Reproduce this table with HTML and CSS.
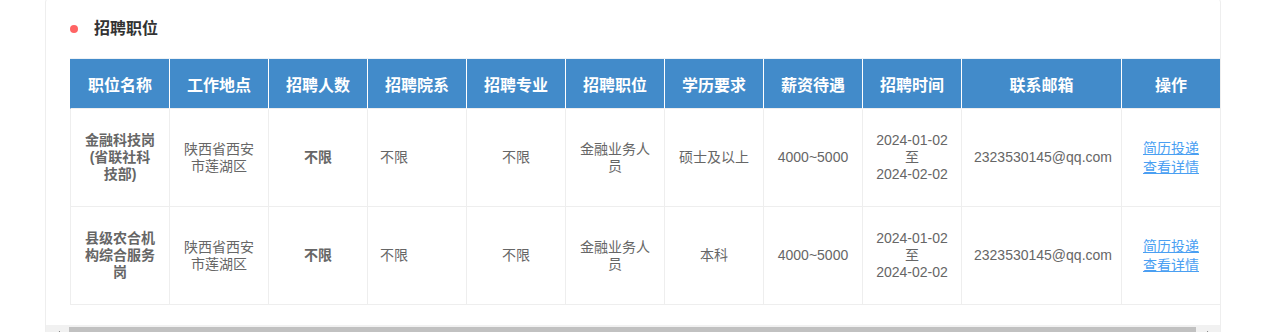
FILE: index.html
```html
<!DOCTYPE html>
<html lang="zh-CN">
<head>
<meta charset="utf-8">
<title>招聘职位</title>
<link rel="stylesheet" href="styles.css">
</head>
<body>
<div class="page">
  <div class="card">
    <div class="title"><span class="dot"></span><h2>招聘职位</h2></div>
    <div class="scroll">
      <table class="jobs">
        <thead>
          <tr>
            <th class="c-first">职位名称</th>
            <th class="c-std">工作地点</th>
            <th class="c-std">招聘人数</th>
            <th class="c-std">招聘院系</th>
            <th class="c-std">招聘专业</th>
            <th class="c-std">招聘职位</th>
            <th class="c-std">学历要求</th>
            <th class="c-std">薪资待遇</th>
            <th class="c-std">招聘时间</th>
            <th class="c-mail">联系邮箱</th>
            <th class="c-std">操作</th>
          </tr>
        </thead>
        <tbody>
          <tr>
            <td class="strong">金融科技岗(省联社科技部)</td>
            <td>陕西省西安市莲湖区</td>
            <td class="strong">不限</td>
            <td class="left">不限</td>
            <td>不限</td>
            <td>金融业务人员</td>
            <td>硕士及以上</td>
            <td>4000~5000</td>
            <td>2024-01-02<br>至<br>2024-02-02</td>
            <td>2323530145@qq.com</td>
            <td><a class="op" href="#">简历投递</a><a class="op" href="#">查看详情</a></td>
          </tr>
          <tr>
            <td class="strong">县级农合机构综合服务岗</td>
            <td>陕西省西安市莲湖区</td>
            <td class="strong">不限</td>
            <td class="left">不限</td>
            <td>不限</td>
            <td>金融业务人员</td>
            <td>本科</td>
            <td>4000~5000</td>
            <td>2024-01-02<br>至<br>2024-02-02</td>
            <td>2323530145@qq.com</td>
            <td><a class="op" href="#">简历投递</a><a class="op" href="#">查看详情</a></td>
          </tr>
        </tbody>
      </table>
    </div>
    <div class="scrollbar">
      <span class="arrow arrow-left"></span>
      <span class="track"><span class="thumb"></span></span>
      <span class="arrow arrow-right"></span>
    </div>
  </div>
</div>
</body>
</html>
```

FILE: styles.css
```css
html, body {
  margin: 0;
  padding: 0;
  height: 332px;
  overflow: hidden;
  background: #fff;
}
body {
  font-family: "Liberation Sans", "Noto Sans CJK SC", sans-serif;
  color: #666;
}
.page {
  padding-left: 45px;
}
.card {
  width: 1176px;
  box-sizing: border-box;
  margin-top: -2px;
  border: 1px solid #eee;
  border-radius: 4px;
  background: #fff;
  height: 400px;
}
.title {
  display: flex;
  align-items: center;
  padding: 19px 0 18px 24px;
  height: 22px;
}
.dot {
  width: 8px;
  height: 8px;
  border-radius: 50%;
  background: #ff6464;
  margin-right: 16px;
}
.title h2 {
  margin: 0;
  font-size: 16px;
  line-height: 22px;
  font-weight: bold;
  color: #333;
}
.scroll {
  padding: 0 0 20px 24px;
  overflow: hidden;
}
.jobs {
  table-layout: fixed;
  width: 1151px;
  border-collapse: separate;
  border-spacing: 0;
  border-top: 1px solid #eef2f6;
}
.jobs th, .jobs td {
  box-sizing: border-box;
  padding: 0 12px;
  text-align: center;
  vertical-align: middle;
}
.jobs th {
  height: 50px;
  background: #428bca;
  color: #fff;
  font-size: 16px;
  font-weight: bold;
  border-right: 1px solid #fff;
  border-bottom: 1px solid #eee;
  white-space: nowrap;
}
.jobs th.c-first { width: 100px; border-left: 1px solid #428bca; }
.jobs th.c-std { width: 99px; }
.jobs th.c-mail { width: 160px; }
.jobs td {
  height: 98px;
  font-size: 14px;
  line-height: 17px;
  color: #666;
  border-right: 1px solid #eee;
  border-bottom: 1px solid #eee;
}
.jobs td:first-child {
  border-left: 1px solid #eee;
}
.jobs td.strong {
  font-weight: bold;
}
.jobs td.left {
  text-align: left;
}
.op {
  display: block;
  line-height: 19px;
  color: #4a9ff2;
  text-decoration: underline;
}
.scrollbar {
  display: flex;
  height: 17px;
  background: #f1f1f1;
}
.arrow {
  width: 17px;
  position: relative;
}
.arrow::after {
  content: "";
  position: absolute;
  top: 6px;
  width: 0;
  height: 0;
  border-top: 3px solid transparent;
  border-bottom: 3px solid transparent;
}
.arrow-left::after {
  left: 10px;
  border-right: 4px solid #505050;
}
.arrow-right::after {
  left: 4px;
  border-left: 4px solid #505050;
}
.track {
  flex: 1;
  display: flex;
  padding: 2px 7px 2px 6px;
}
.thumb {
  flex: 1;
  background: #c1c1c1;
}
```
